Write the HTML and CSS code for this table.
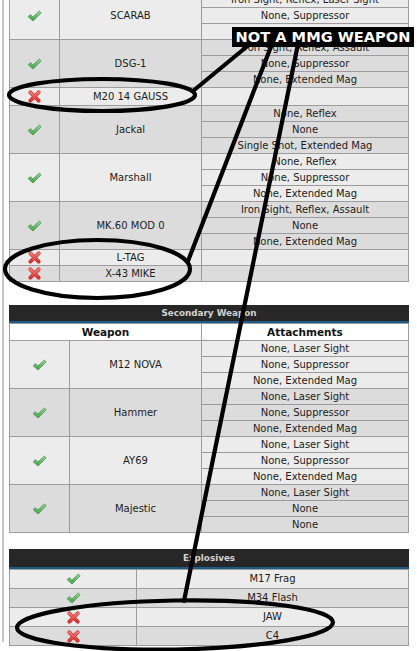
FILE: index.html
```html
<!DOCTYPE html>
<html>
<head>
<meta charset="utf-8">
<link rel="stylesheet" href="styles.css">
</head>
<body>
<div class="page">
  <div class="rail">
    <table class="grid primary">
      <colgroup><col class="c-ok1"><col class="c-name1"><col></colgroup>
      <tr class="a"><td rowspan="3"><svg class="ok" viewBox="0 0 16 13"><use href="#chk"/></svg></td><td rowspan="3">SCARAB</td><td>Iron Sight, Reflex, Laser Sight</td></tr>
      <tr class="a"><td>None, Suppressor</td></tr>
      <tr class="a"><td></td></tr>
      <tr class="b"><td rowspan="3"><svg class="ok" viewBox="0 0 16 13"><use href="#chk"/></svg></td><td rowspan="3">DSG-1</td><td>Iron Sight, Reflex, Assault</td></tr>
      <tr class="b"><td>None, Suppressor</td></tr>
      <tr class="b"><td>None, Extended Mag</td></tr>
      <tr class="a tall"><td><svg class="no" viewBox="0 0 14 14"><use href="#crs"/></svg></td><td>M20 14 GAUSS</td><td></td></tr>
      <tr class="b"><td rowspan="3"><svg class="ok" viewBox="0 0 16 13"><use href="#chk"/></svg></td><td rowspan="3">Jackal</td><td>None, Reflex</td></tr>
      <tr class="b"><td>None</td></tr>
      <tr class="b"><td>Single Shot, Extended Mag</td></tr>
      <tr class="a"><td rowspan="3"><svg class="ok" viewBox="0 0 16 13"><use href="#chk"/></svg></td><td rowspan="3">Marshall</td><td>None, Reflex</td></tr>
      <tr class="a"><td>None, Suppressor</td></tr>
      <tr class="a"><td>None, Extended Mag</td></tr>
      <tr class="b"><td rowspan="3"><svg class="ok" viewBox="0 0 16 13"><use href="#chk"/></svg></td><td rowspan="3">MK.60 MOD 0</td><td>Iron Sight, Reflex, Assault</td></tr>
      <tr class="b"><td>None</td></tr>
      <tr class="b"><td>None, Extended Mag</td></tr>
      <tr class="a"><td><svg class="no" viewBox="0 0 14 14"><use href="#crs"/></svg></td><td>L-TAG</td><td></td></tr>
      <tr class="b"><td><svg class="no" viewBox="0 0 14 14"><use href="#crs"/></svg></td><td>X-43 MIKE</td><td></td></tr>
    </table>

    <section class="block secondary">
      <div class="bar">Secondary Weapon</div>
      <table class="grid">
        <colgroup><col class="c-ok2"><col class="c-name2"><col></colgroup>
        <tr class="head"><th colspan="2">Weapon</th><th>Attachments</th></tr>
        <tr class="a"><td rowspan="3"><svg class="ok" viewBox="0 0 16 13"><use href="#chk"/></svg></td><td rowspan="3">M12 NOVA</td><td>None, Laser Sight</td></tr>
        <tr class="a"><td>None, Suppressor</td></tr>
        <tr class="a"><td>None, Extended Mag</td></tr>
        <tr class="b"><td rowspan="3"><svg class="ok" viewBox="0 0 16 13"><use href="#chk"/></svg></td><td rowspan="3">Hammer</td><td>None, Laser Sight</td></tr>
        <tr class="b"><td>None, Suppressor</td></tr>
        <tr class="b"><td>None, Extended Mag</td></tr>
        <tr class="a"><td rowspan="3"><svg class="ok" viewBox="0 0 16 13"><use href="#chk"/></svg></td><td rowspan="3">AY69</td><td>None, Laser Sight</td></tr>
        <tr class="a"><td>None, Suppressor</td></tr>
        <tr class="a"><td>None, Extended Mag</td></tr>
        <tr class="b"><td rowspan="3"><svg class="ok" viewBox="0 0 16 13"><use href="#chk"/></svg></td><td rowspan="3">Majestic</td><td>None, Laser Sight</td></tr>
        <tr class="b"><td>None</td></tr>
        <tr class="b"><td>None</td></tr>
      </table>
    </section>

    <section class="block explosives">
      <div class="bar">Explosives</div>
      <table class="grid big">
        <colgroup><col class="c-ok3"><col></colgroup>
        <tr class="a"><td><svg class="ok" viewBox="0 0 16 13"><use href="#chk"/></svg></td><td>M17 Frag</td></tr>
        <tr class="b"><td><svg class="ok" viewBox="0 0 16 13"><use href="#chk"/></svg></td><td>M34 Flash</td></tr>
        <tr class="a"><td><svg class="no" viewBox="0 0 14 14"><use href="#crs"/></svg></td><td>JAW</td></tr>
        <tr class="b"><td><svg class="no" viewBox="0 0 14 14"><use href="#crs"/></svg></td><td>C4</td></tr>
      </table>
    </section>
  </div>

  <svg class="defs" width="0" height="0">
    <defs>
      <linearGradient id="gg" x1="0" y1="0" x2="0" y2="1">
        <stop offset="0" stop-color="#9ad89a"/>
        <stop offset="1" stop-color="#3f9c45"/>
      </linearGradient>
      <linearGradient id="rg" x1="0" y1="0" x2="0" y2="1">
        <stop offset="0" stop-color="#f27a7a"/>
        <stop offset="1" stop-color="#d83434"/>
      </linearGradient>
      <symbol id="chk" viewBox="0 0 16 13">
        <path d="M1 7.2 L3.6 5 L6.3 7.6 L13.2 1 L15.2 3.2 L6.4 12 Z" fill="url(#gg)" stroke="#3c8c40" stroke-width="0.7" stroke-linejoin="round"/>
      </symbol>
      <symbol id="crs" viewBox="0 0 14 14">
        <path d="M2.5 2.5 L11.5 11.5 M11.5 2.5 L2.5 11.5" stroke="#c92f2f" stroke-width="4" stroke-linecap="round"/>
        <path d="M2.5 2.5 L11.5 11.5 M11.5 2.5 L2.5 11.5" stroke="url(#rg)" stroke-width="2.8" stroke-linecap="round"/>
      </symbol>
    </defs>
  </svg>

  <svg class="ink" viewBox="0 0 417 651" width="417" height="651">
    <g fill="none" stroke="#000" stroke-width="4.2" stroke-linecap="round">
      <ellipse cx="102" cy="95" rx="93" ry="16"/>
      <ellipse cx="97.5" cy="269" rx="92.5" ry="29"/>
      <ellipse cx="175" cy="625" rx="158" ry="24.5" transform="rotate(-1 175 625)"/>
      <line x1="193" y1="91" x2="250" y2="44"/>
      <line x1="188" y1="261" x2="272" y2="44"/>
      <line x1="184" y1="601" x2="298" y2="44"/>
    </g>
  </svg>
  <div class="tag">NOT A MMG WEAPON</div>
</div>
</body>
</html>
```

FILE: styles.css
```css
html, body {
  margin: 0;
  padding: 0;
  background: #fff;
}
body {
  font-family: "DejaVu Sans", Verdana, sans-serif;
  font-size: 10px;
  color: #1c1c1c;
}
.page {
  position: relative;
  width: 417px;
  height: 651px;
  overflow: hidden;
  padding-left: 2px;
  box-sizing: border-box;
}
.rail {
  border-left: 2px solid #c6c6c6;
  padding-left: 5px;
  height: 100%;
}
.grid {
  border-collapse: collapse;
  table-layout: fixed;
  width: 400px;
}
.primary {
  margin-top: -9px;
}
.c-ok1 { width: 50px; }
.c-name1 { width: 142px; }
.c-ok2 { width: 60px; }
.c-name2 { width: 132px; }
.c-ok3 { width: 127px; }
.grid td, .grid th {
  border: 1px solid #9c9c9c;
  padding: 0;
  height: 15px;
  line-height: 14px;
  text-align: center;
  white-space: nowrap;
  overflow: hidden;
  vertical-align: middle;
}
.grid tr.tall td {
  height: 17px;
}
.grid tr.a td { background: #ececec; }
.grid tr.b td { background: #dcdcdc; }
.grid tr.head th {
  background: #fff;
  font-weight: bold;
  font-size: 10.5px;
  color: #111;
  height: 16px;
}
.big td {
  height: 18px;
}
.ok {
  width: 15px;
  height: 12px;
  display: block;
  margin: 0 auto;
}
.no {
  width: 13px;
  height: 13px;
  display: block;
  margin: 0 auto;
}
.defs {
  position: absolute;
  width: 0;
  height: 0;
}
.block.secondary {
  margin-top: 23px;
}
.block.explosives {
  margin-top: 16px;
}
.bar {
  width: 400px;
  height: 16px;
  box-sizing: content-box;
  background: #272727;
  border-bottom: 2px solid #1d5a85;
  color: #d2d2d2;
  font-weight: bold;
  font-size: 8.8px;
  line-height: 16px;
  text-align: center;
}
.explosives .bar {
  height: 18px;
  line-height: 18px;
}
.ink {
  position: absolute;
  left: 0;
  top: 0;
  pointer-events: none;
}
.tag {
  position: absolute;
  left: 232px;
  top: 27px;
  width: 182px;
  height: 20px;
  background: #000;
  color: #fff;
  font-weight: bold;
  font-size: 14.6px;
  line-height: 20px;
  text-align: center;
  white-space: nowrap;
}
```
